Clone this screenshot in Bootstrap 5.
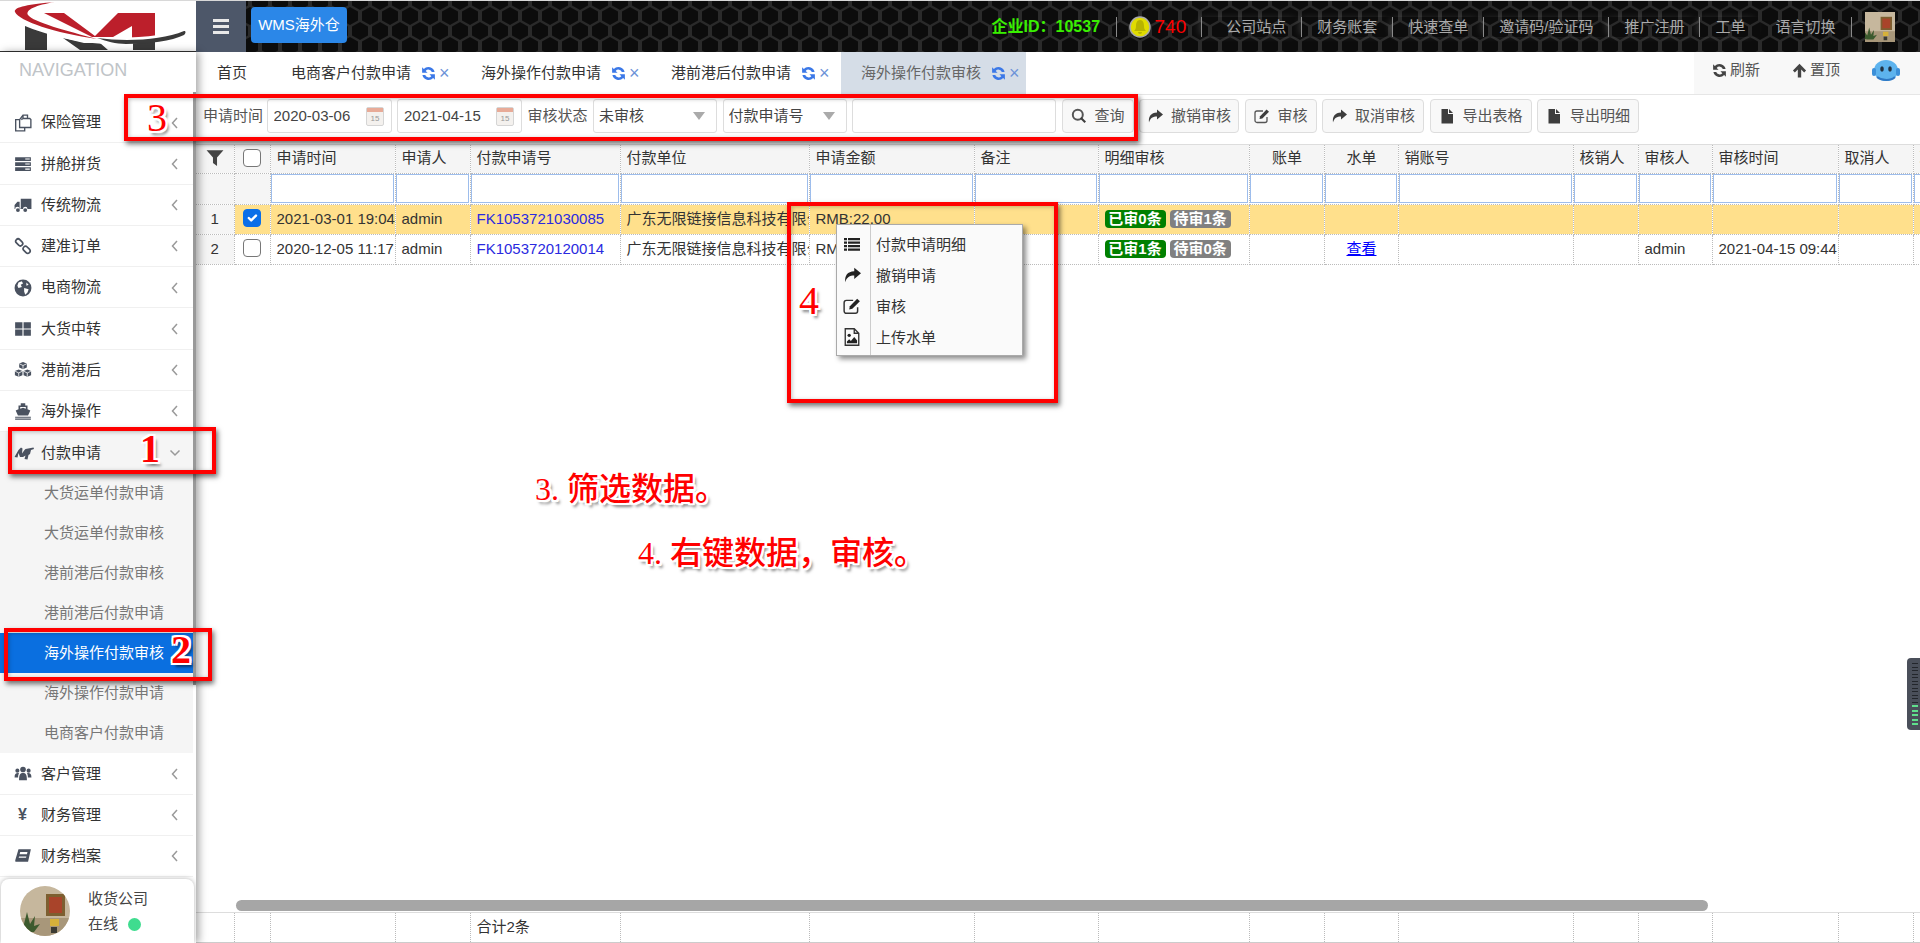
<!DOCTYPE html>
<html lang="zh">
<head>
  <meta charset="UTF-8">
  <title>WMS海外仓 - 海外操作付款审核</title>
  <link href="https://cdn.jsdelivr.net/npm/bootstrap@5.3.0/dist/css/bootstrap.min.css" rel="stylesheet">
  <style>
    html, body { height: 100%; margin: 0; overflow: hidden; }
    body { font-family: "Liberation Sans", "Noto Sans CJK SC", sans-serif; font-size: 15px; color: #333; background: #fff; }
    .app-wrap { height: 943px; width: 1920px; position: relative; overflow: hidden; }

    /* top bar */
    .top-bar { height: 52px; border-top: 1px solid #d8d8d8; position: relative; background: #1a1a1a; }
    .hex-bg { position: absolute; left: 0; top: 0; width: 100%; height: 100%; }
    .logo-box { width: 196px; height: 51px; background: #fff; border-bottom: 1px solid #333; position: relative; }
    .menu-toggle { width: 50px; height: 51px; background: #4d5769; position: relative; border: 0; padding: 0; }
    .menu-toggle span { display: block; width: 16px; height: 3px; background: #e8e8e8; margin: 3px auto; }
    .wms-btn { position: relative; margin: 6px 0 0 5px; width: 96px; height: 36px; padding: 0; background: #2b87e8; border: 0; color: #fff; font-size: 15px; border-radius: 4px; }
    .top-right { position: relative; height: 51px; }
    .corp-id { color: #39f000; font-weight: bold; font-size: 16px; margin-right: 15.5px; }
    .top-link { height: 20px; line-height: 20px; padding: 0 15px; border-left: 1px solid #8a8a8a; color: #aaa; white-space: nowrap; box-shadow: -3px 0 8px -3px rgba(255, 255, 255, .25); }
    .top-link.first { padding-left: 24px; }
    .top-link.plain { border-left: 0; padding-left: 15px; padding-right: 15.5px; box-shadow: none; }
    .alarm { height: 20px; line-height: 20px; padding: 0 15px 0 12px; border-left: 1px solid #8a8a8a; color: #f00; font-size: 19px; display: flex; align-items: center; gap: 4px; }
    .top-photo { width: 30px; height: 30px; margin: 0 25px 0 13px; display: block; }
    .photo-wrap { border-left: 1px solid #8a8a8a; height: 20px; display: flex; align-items: center; }

    /* side menu */
    .side-menu { width: 196px; height: 891px; position: relative; background: #fff; box-shadow: 3px 0 8px rgba(0, 0, 0, .35); overflow: hidden; z-index: 3; flex: none; }
    .side-scroll { position: absolute; right: 0; top: 40px; width: 3px; height: 593px; background: #999; }
    .nav-title { height: 50px; padding: 6px 0 0 19px; font-size: 18px; line-height: 24px; color: #c0c4c8; }
    .menu-row { height: 41.25px; width: 193px; display: flex; align-items: center; border-bottom: 1px solid #f0f0f0; color: #333; padding-left: 14px; padding-top: 1px; }
    .menu-row.open { border-bottom: 0; background: #f5f5f5; }
    .menu-ico { width: 18px; height: 18px; color: #4a5260; flex: none; fill: currentColor; margin-right: 9px; }
    .menu-ico.wide { width: 21px; margin-right: 6px; }
    .yen-ico { width: 17px; margin-right: 10px; text-align: center; color: #4a5260; font-weight: bold; flex: none; font-size: 16px; }
    .menu-arrow { margin-left: auto; margin-right: 14px; width: 8px; height: 12px; stroke: #999; fill: none; stroke-width: 1.5; }
    .menu-arrow.down { width: 12px; margin-right: 12px; }
    .sub-list { width: 193px; background: #f5f5f5; }
    .sub-row { height: 40px; line-height: 40px; padding-left: 44px; color: #777; }
    .sub-row.current { background: #0a6fe0; color: #fff; }
    .user-panel { position: absolute; left: 1px; top: 827px; width: 193px; height: 64px; background: #fff; border-radius: 8px 8px 0 0; box-shadow: 0 0 5px rgba(0, 0, 0, .3); display: flex; }
    .user-photo { width: 50px; height: 50px; border-radius: 50%; margin: 7px 18px 0 19px; flex: none; }
    .user-text { line-height: 25px; padding-top: 7px; color: #444; }
    .dot-online { display: inline-block; width: 13px; height: 13px; border-radius: 50%; background: #3fdc8f; margin-left: 10px; vertical-align: -2px; }

    /* tabs */
    .page-area { width: 1724px; height: 891px; flex: none; }
    .tab-row { height: 43px; border-bottom: 1px solid #e6e6e6; }
    .tab-cell { height: 42px; display: flex; align-items: center; padding-left: 20px; width: 190px; color: #333; }
    .tab-cell.home { width: 75px; padding-left: 21px; }
    .tab-cell.active { width: 185px; background: #d5dde7; color: #666; }
    .tab-sync { width: 15px; height: 15px; fill: #3b78e7; margin: 0 3px 0 10px; }
    .tab-x { color: #6d93d8; font-size: 18px; line-height: 14px; }
    .tab-tools { margin-left: auto; width: 226px; height: 42px; background: #f8f8f8; display: flex; align-items: center; color: #555; padding: 0 0 5px 18px; }
    .tool-ico { width: 15px; height: 15px; fill: #444; margin-right: 3px; }
    .tool-ico.next { margin-left: 32px; }
    .robot-ico { width: 28px; height: 22px; margin-left: 32px; }

    /* filter bar */
    .filter-bar { height: 49px; padding: 4px 0 0 7px; gap: 5.5px; }
    .filter-label { line-height: 34px; color: #555; white-space: nowrap; width: 58px; }
    .filter-label.second { width: 60px; }
    .date-box { width: 125px; height: 34px; border: 1px solid #ddd; border-radius: 3px; padding: 0 7px 0 6px; }
    .date-box input { border: 0; outline: 0; width: 88px; font-size: 15px; color: #444; padding: 0; background: transparent; }
    .date-ico { width: 18px; height: 20px; margin-left: auto; }
    .filter-sel.form-select { width: 124px; height: 34px; border: 1px solid #ddd; border-radius: 3px; font-size: 15px; color: #444; padding: 0 20px 0 5px;
      background-image: url("data:image/svg+xml,%3Csvg xmlns='http://www.w3.org/2000/svg' viewBox='0 0 12 8'%3E%3Cpath fill='%23aaa' d='M0 0h12L6 8z'/%3E%3C/svg%3E"); background-size: 12px 8px; background-position: right 11px center; }
    .filter-text.form-control { width: 204px; height: 34px; border: 1px solid #ddd; border-radius: 3px; }
    .bar-btn.btn { height: 34px; padding: 0 8px; background: #f8f8f8; border: 1px solid #ddd; border-radius: 4px; color: #555; font-size: 15px; display: flex; align-items: center; gap: 8px; white-space: nowrap; }
    .bar-btn.btn.tight { padding: 0 7px; }
    .bar-ico { width: 16px; height: 16px; fill: #3d3d3d; flex: none; }

    /* grid */
    .grid-scroll { flex: 1; overflow: hidden; border-top: 1px solid #ddd; }
    .grid-tbl { table-layout: fixed; width: 1696px; border-collapse: collapse; margin: 0; }
    .grid-tbl col:nth-child(1) { width: 38px; }
    .grid-tbl col:nth-child(2) { width: 36px; }
    .grid-tbl col:nth-child(3) { width: 125px; }
    .grid-tbl col:nth-child(4) { width: 75px; }
    .grid-tbl col:nth-child(5) { width: 150px; }
    .grid-tbl col:nth-child(6) { width: 189px; }
    .grid-tbl col:nth-child(7) { width: 165px; }
    .grid-tbl col:nth-child(8) { width: 124px; }
    .grid-tbl col:nth-child(9) { width: 151px; }
    .grid-tbl col:nth-child(10) { width: 75px; }
    .grid-tbl col:nth-child(11) { width: 74px; }
    .grid-tbl col:nth-child(12) { width: 175px; }
    .grid-tbl col:nth-child(13) { width: 65px; }
    .grid-tbl col:nth-child(14) { width: 74px; }
    .grid-tbl col:nth-child(15) { width: 126px; }
    .grid-tbl col:nth-child(16) { width: 75px; }
    .grid-tbl col:nth-child(17) { width: 99px; }
    .grid-tbl th, .grid-tbl td { padding: 0 5px 0 6px; border: 0; border-right: 1px dotted #bbb; border-bottom: 1px dotted #bbb; box-shadow: none; white-space: nowrap; overflow: hidden; font-weight: normal; font-size: 15px; color: #333; vertical-align: middle; }
    .grid-tbl th { height: 28px; background: #f5f5f5; padding-bottom: 2px; }
    .grid-tbl td { height: 30px; }
    .grid-tbl tr.filter-row td { height: 31px; padding: 0 1px 0 0; background: #fff; }
    .grid-tbl tr.filter-row td.idx, .grid-tbl td.idx { background: #f5f5f5; text-align: center; padding: 0; }
    .grid-tbl tr.filter-row td.blank { background: #f5f5f5; }
    .grid-tbl tr.sel td { background: #ffe08c; }
    .grid-tbl tr.sel td.idx { background: #f5f5f5; }
    .grid-tbl .chk-cell { text-align: center; padding: 0; }
    .grid-tbl .mid { text-align: center; }
    .col-filter.form-control { height: 29px; width: 100%; padding: 0; border: 1px solid #9dbdec; border-radius: 0; min-height: 0; }
    .row-chk.form-check-input { width: 18px; height: 18px; margin: 1px 0 0; border: 1px solid #777; border-radius: 4px; float: none; }
    .row-chk.form-check-input:checked { background-color: #0a6fe8; border-color: #0a6fe8; }
    .filter-ico { width: 18px; height: 18px; fill: #444; display: block; margin: 0 auto; }
    .pay-no { color: #2a2ae0; text-decoration: none; }
    .view-link { color: #00f; }
    .tag-ok, .tag-wait { display: inline-block; width: 61px; height: 18px; line-height: 18px; border-radius: 4px; color: #fff; font-weight: bold; text-align: center; font-size: 15px; }
    .tag-ok { background: #008000; }
    .tag-wait { background: #808080; }
    .h-scroll { height: 11px; width: 1472px; margin: 0 0 1px 40px; background: #a6a6a6; border-radius: 6px; flex: none; }
    .sum-row { flex: none; border-top: 1px solid #ddd; overflow: hidden; height: 31px; border-bottom: 1px solid #ccc; }
    .sum-row .grid-tbl td { border-bottom: 0; height: 29px; }

    /* right-click menu */
    .ctx-menu.dropdown-menu { display: block; position: absolute; left: 836px; top: 224px; width: 187px; height: 132px; min-width: 0; padding: 5px 0 0; margin: 0; border: 1px solid #aaa; border-radius: 0; box-shadow: 3px 3px 5px rgba(0, 0, 0, .45); z-index: 6;
      background: linear-gradient(#ccc, #ccc) 33px 0 / 1px 100% no-repeat #fafafa; }
    .ctx-item { height: 31px; display: flex; align-items: center; color: #333; font-size: 15px; }
    .ctx-ico { width: 18px; height: 18px; margin: -4px 15px 0 6px; fill: #222; flex: none; }

    /* red notes painted over the page */
    .note-box { position: absolute; border: 4px solid #f00; box-shadow: 2px 3px 5px rgba(0, 0, 0, .55), inset 1px 1px 4px rgba(0, 0, 0, .25); z-index: 7; pointer-events: none; }
    .note-mark { position: absolute; z-index: 8; color: #f00; font-family: "Liberation Serif", "Noto Sans CJK SC", serif; line-height: 1;
      text-shadow: -2px 0 0 #fff, 2px 0 0 #fff, 0 -2px 0 #fff, 0 2px 0 #fff, -2px -2px 0 #fff, 2px -2px 0 #fff, -2px 2px 0 #fff, 2px 2px 0 #fff, 3px 4px 3px rgba(0, 0, 0, .5); }
    .note-num { font-size: 40px; }
    .note-num.heavy { font-weight: bold; }
    .note-line { font-size: 32px; font-weight: 500; white-space: nowrap; }
    .n1 { left: 8px; top: 427px; width: 208px; height: 47px; }
    .n2 { left: 4px; top: 628px; width: 208px; height: 53px; }
    .n3 { left: 124px; top: 94px; width: 1014px; height: 47px; }
    .n4 { left: 787px; top: 202px; width: 271px; height: 201px; }
    .m1 { left: 140px; top: 429px; }
    .m2 { left: 171px; top: 630px; }
    .m3 { left: 147px; top: 98px; }
    .m4 { left: 799px; top: 281px; }
    .l3 { left: 535px; top: 473px; }
    .l4 { left: 638px; top: 537px; }

    .side-widget { position: absolute; right: 0; top: 658px; width: 13px; height: 72px; background: #4a4f5a; border-radius: 4px 0 0 4px; z-index: 4; padding: 5px 2px 5px 5px; display: flex; flex-direction: column; justify-content: space-between; }
    .side-widget i { display: block; height: 1px; background: #23262c; }
    .side-widget i.on { background: #5fe08c; height: 2px; }
  </style>
</head>
<body>
<svg width="0" height="0" class="position-absolute">
  <defs>
    <symbol id="i-copy" viewBox="0 0 16 16"><path fill="none" stroke="currentColor" stroke-width="1.2" d="M5 5H1.5v10h8v-3M5 5l3-4h4v3M5 5v7h10V5l-1-1H8L6.5 5M8 1v3"/></symbol>
    <symbol id="i-server" viewBox="0 0 16 16"><path d="M1 2h14v3.4H1zM1 6.4h14v3.4H1zM1 10.8h14v3.4H1z"/><path fill="#fff" d="M10 3h4v1h-4zM10 7.5h4v1h-4zM10 12h4v1h-4z"/></symbol>
    <symbol id="i-truck" viewBox="0 0 16 16"><path d="M6 2.5h9.500v9H12a2 2 0 0 0-4 0H6.500A2 2 0 0 0 6 11H5V5H3L.5 8v3.500H1a2 2 0 0 1 4 0h1z"/><circle cx="3.500" cy="12.500" r="1.700"/><circle cx="10" cy="12.500" r="1.700"/></symbol>
    <symbol id="i-link" viewBox="0 0 16 16"><g fill="none" stroke="currentColor" stroke-width="1.500"><rect x="-3.200" y="-2" width="7" height="4.200" rx="2.100" transform="translate(4.500 4.500) rotate(45)"/><rect x="-3.800" y="-2" width="7" height="4.200" rx="2.100" transform="translate(11.500 11.500) rotate(45)"/></g></symbol>
    <symbol id="i-globe" viewBox="0 0 16 16"><circle cx="8" cy="8" r="7.500"/><path fill="#fff" d="M4 3l3-1 1 2-2 1 1 2-3 1-1-2zM9 8l4 1-1 3-2 2-1-3zM11 3l2 2-2 1z"/></symbol>
    <symbol id="i-grid" viewBox="0 0 16 16"><path d="M1 2h6.500v5.500H1zM8.500 2H15v5.500H8.500zM1 8.500h6.500V14H1zM8.500 8.500H15V14H8.500z"/></symbol>
    <symbol id="i-cubes" viewBox="0 0 16 16"><path d="M8 .8l3.400 1.500v3.500L8 7.300 4.600 5.800V2.300zM4.200 7.500l3.300 1.400v3.700l-3.300 1.500L.8 12.600V8.900zM11.800 7.500l3.400 1.400v3.700l-3.400 1.500-3.300-1.500V8.900z"/><path fill="none" stroke="#fff" stroke-width=".7" d="M4.800 2.500L8 4l3.200-1.500M8 4v3M1 9.100l3.200 1.500 3.200-1.500M4.200 10.600v3.300M8.600 9.100l3.200 1.500L15 9.100M11.800 10.600v3.300"/></symbol>
    <symbol id="i-ship" viewBox="0 0 16 16"><path d="M6 1h4v2h2v3.500l2.500 1L12.500 12h-9L1.500 7.500 4 6.500V3h2zM5.500 4.500v1.400L8 5l2.500.9V4.500zM1 13h14v1H1zM1 14.700h14v1H1z"/></symbol>
    <symbol id="i-pay" viewBox="0 0 21 16"><path d="M.5 12L4.500 5 7 2.500l1.500 1-.5 5 2.500-3.500 1-1 8-1.500.5 1.500-3 1-1 4-1.500 1-1 4.500-3-.5 1-3.500-2.500 1.500H6L4.500 8 3.500 12.500z"/></symbol>
    <symbol id="i-users" viewBox="0 0 16 16"><circle cx="3" cy="5" r="1.800"/><circle cx="13" cy="5" r="1.800"/><circle cx="8" cy="4" r="2.500"/><path d="M.5 11c0-3 1-4 3-4l1 .3C3.800 8.300 3.600 9.700 3.700 11zM15.500 11c0-3-1-4-3-4l-1 .3c.7 1 .9 2.400.8 3.700zM4.500 13.500c0-5 1-6.500 3.500-6.500s3.500 1.500 3.500 6.500z"/></symbol>
    <symbol id="i-book" viewBox="0 0 16 16"><path d="M4 2h11l-2.500 11H1.500C1 13 1 12 1.300 11zM5.500 4.500L5 6.500h6.500l.5-2zM4.500 8.500l-.3 1h6.500l.3-1z"/></symbol>
    <symbol id="i-sync" viewBox="0 0 16 16"><path d="M14.500 6.500A6.800 6.800 0 0 0 3 3.200L1.200 1.400v5.800h5.800L5 5.200a3.800 3.800 0 0 1 6.500 1.300z"/><path d="M1.500 9.500A6.800 6.800 0 0 0 13 12.800l1.800 1.800V8.800H9l2 2a3.800 3.800 0 0 1-6.500-1.300z"/></symbol>
    <symbol id="i-up" viewBox="0 0 16 16"><path d="M8 .8l7 7.200-2 2-3.200-3.200V15.500H6.200V6.800L3 10 1 8z"/></symbol>
    <symbol id="i-search" viewBox="0 0 16 16"><circle cx="6.800" cy="6.800" r="5" fill="none" stroke="currentColor" stroke-width="2"/><path d="M10.400 9L15 13.600 13.500 15l-4.500-4.500z"/></symbol>
    <symbol id="i-share" viewBox="0 0 16 16"><path d="M10 1.500L16 6.500l-6 5V8.500C6 8.500 3.200 10 2 14.500 1.300 8.500 4 4.800 10 4.600z"/></symbol>
    <symbol id="i-edit" viewBox="0 0 16 16"><path fill="none" stroke="currentColor" stroke-width="1.300" d="M13 9v3.500a2 2 0 0 1-2 2H3a2 2 0 0 1-2-2V5a2 2 0 0 1 2-2h6"/><path d="M5.500 11l.6-2.800 6.500-6.700 2.400 2.300L8.300 10.500z"/></symbol>
    <symbol id="i-file" viewBox="0 0 16 16"><path d="M2.500 1H9v5h5v9.500H2.500zM10 1l4 4h-4z"/></symbol>
    <symbol id="i-funnel" viewBox="0 0 16 16"><path d="M.5 1h15L9.800 7.500V15L6.200 12.500v-5z"/></symbol>
    <symbol id="i-list" viewBox="0 0 18 16"><path d="M1 2h3v2.200H1zM5 2h12v2.200H5zM1 5.500h3v2.200H1zM5 5.500h12v2.200H5zM1 9h3v2.200H1zM5 9h12v2.200H5zM1 12.500h3v2.200H1zM5 12.500h12v2.200H5z"/></symbol>
    <symbol id="i-img" viewBox="0 0 16 16"><path fill="none" stroke="currentColor" stroke-width="1.200" d="M2 .7h8l4 4v10.600H2zM10 .7v4h4"/><circle cx="5.500" cy="6.500" r="1.500"/><path d="M3.500 13.500V12l2-2 1.500 1.500 3-3.500 2.500 3v2.500z"/></symbol>
    <symbol id="i-photo" viewBox="0 0 50 50"><rect width="50" height="50" fill="#c6b79d"/><rect y="32" width="50" height="18" fill="#a8977a"/><rect x="26" y="8" width="19" height="22" fill="#7d5f30"/><rect x="29" y="11" width="13" height="16" fill="#a9442a"/><rect x="30" y="33" width="9" height="7" fill="#d6b13a"/><rect x="31" y="41" width="6" height="6" fill="#3b3b33"/><path fill="#3c5a2e" d="M2 46L7 26l3 12 5-8-1 10 6-2-6 8zM0 34l6 8-6 4z"/></symbol>
    <symbol id="i-date" viewBox="0 0 18 20"><rect x=".5" y="1.500" width="17" height="18" rx="1.500" fill="#f4f1ee" stroke="#d5d5d5"/><rect x="1" y="2" width="16" height="4" fill="#e8ab98"/><text x="9" y="15" font-size="8" fill="#999" text-anchor="middle" font-family="Liberation Sans">15</text></symbol>
  </defs>
</svg>

<div class="app-wrap">
  <!-- TOP BAR -->
  <div class="top-bar d-flex">
    <svg class="hex-bg" aria-hidden="true">
      <defs>
        <pattern id="hexPat" width="20" height="30" patternUnits="userSpaceOnUse">
          <rect width="20" height="30" fill="#2a2a2a"/>
          <path fill="#0c0c0c" d="M10 6l8 4.500v9L10 24l-8-4.500v-9zM0-9l8 4.500v9L0 9l-8-4.500v-9zM20-9l8 4.500v9L20 9l-8-4.500v-9zM0 21l8 4.500v9L0 39l-8-4.500v-9zM20 21l8 4.500v9L20 39l-8-4.500v-9z"/>
        </pattern>
      </defs>
      <rect width="100%" height="100%" fill="url(#hexPat)"/>
    </svg>
    <div class="logo-box">
      <svg width="196" height="50" viewBox="0 0 196 50">
        <path fill="#3a3a3a" d="M25 23l22 7v19H25zM63 37l17 12h28l-8-7H84zM133 41h22v8h-22z"/>
        <path fill="#bc1f2b" d="M44 12h20l31 23 23-23h37v26h-23V25l-19 11H92z"/>
        <path fill="#fff" d="M22 18c25 12 60 19 85 19 30 0 55-2 78-9v4c-22 9-50 11-78 11-30-1-65-10-89-21z"/>
        <path fill="#b81f2a" d="M55 1C30 3 13 6 15 11c4 9 40 21 82 27-30-8-64-17-69-24-3-5 8-10 27-13z"/>
        <path fill="#3a3a3a" d="M97 37c30 4 65 2 87-7 2 0 2 2 0 4-12 6-35 9-58 9-10 0-20-3-29-6z"/>
      </svg>
    </div>
    <button class="menu-toggle" aria-label="menu"><span></span><span></span><span></span></button>
    <button class="wms-btn">WMS海外仓</button>
    <div class="top-right d-flex align-items-center ms-auto">
      <span class="corp-id">企业ID：10537</span>
      <span class="alarm">
        <svg width="22" height="22" viewBox="0 0 22 22"><circle cx="11" cy="11" r="10" fill="#e0dc00" stroke="#aaa" stroke-width="1.500"/><path fill="#b8b400" d="M11 4c3 0 4 3 4 6s1 4 2 5H5c1-1 2-2 2-5s1-6 4-6zM9 16h4a2 2 0 0 1-4 0z"/></svg>
        740
      </span>
      <span class="top-link first">公司站点</span>
      <span class="top-link">财务账套</span>
      <span class="top-link">快速查单</span>
      <span class="top-link">邀请码/验证码</span>
      <span class="top-link">推广注册</span>
      <span class="top-link">工单</span>
      <span class="top-link plain">语言切换</span>
      <span class="photo-wrap"><svg class="top-photo"><use href="#i-photo"/></svg></span>
    </div>
  </div>

  <div class="d-flex">
    <!-- SIDE MENU -->
    <div class="side-menu">
      <div class="nav-title">NAVIGATION</div>
      <div class="menu-row"><svg class="menu-ico"><use href="#i-copy"/></svg>保险管理<svg class="menu-arrow" viewBox="0 0 8 12"><path d="M6 1L1.500 6 6 11"/></svg></div>
      <div class="menu-row"><svg class="menu-ico"><use href="#i-server"/></svg>拼舱拼货<svg class="menu-arrow" viewBox="0 0 8 12"><path d="M6 1L1.500 6 6 11"/></svg></div>
      <div class="menu-row"><svg class="menu-ico"><use href="#i-truck"/></svg>传统物流<svg class="menu-arrow" viewBox="0 0 8 12"><path d="M6 1L1.500 6 6 11"/></svg></div>
      <div class="menu-row"><svg class="menu-ico"><use href="#i-link"/></svg>建准订单<svg class="menu-arrow" viewBox="0 0 8 12"><path d="M6 1L1.500 6 6 11"/></svg></div>
      <div class="menu-row"><svg class="menu-ico"><use href="#i-globe"/></svg>电商物流<svg class="menu-arrow" viewBox="0 0 8 12"><path d="M6 1L1.500 6 6 11"/></svg></div>
      <div class="menu-row"><svg class="menu-ico"><use href="#i-grid"/></svg>大货中转<svg class="menu-arrow" viewBox="0 0 8 12"><path d="M6 1L1.500 6 6 11"/></svg></div>
      <div class="menu-row"><svg class="menu-ico"><use href="#i-cubes"/></svg>港前港后<svg class="menu-arrow" viewBox="0 0 8 12"><path d="M6 1L1.500 6 6 11"/></svg></div>
      <div class="menu-row"><svg class="menu-ico"><use href="#i-ship"/></svg>海外操作<svg class="menu-arrow" viewBox="0 0 8 12"><path d="M6 1L1.500 6 6 11"/></svg></div>
      <div class="menu-row open"><svg class="menu-ico wide"><use href="#i-pay"/></svg>付款申请<svg class="menu-arrow down" viewBox="0 0 12 8"><path d="M1.500 1.500L6 6l4.500-4.500"/></svg></div>
      <div class="sub-list">
        <div class="sub-row">大货运单付款申请</div>
        <div class="sub-row">大货运单付款审核</div>
        <div class="sub-row">港前港后付款审核</div>
        <div class="sub-row">港前港后付款申请</div>
        <div class="sub-row current">海外操作付款审核</div>
        <div class="sub-row">海外操作付款申请</div>
        <div class="sub-row">电商客户付款申请</div>
      </div>
      <div class="menu-row"><svg class="menu-ico"><use href="#i-users"/></svg>客户管理<svg class="menu-arrow" viewBox="0 0 8 12"><path d="M6 1L1.500 6 6 11"/></svg></div>
      <div class="menu-row"><span class="yen-ico">¥</span>财务管理<svg class="menu-arrow" viewBox="0 0 8 12"><path d="M6 1L1.500 6 6 11"/></svg></div>
      <div class="menu-row"><svg class="menu-ico"><use href="#i-book"/></svg>财务档案<svg class="menu-arrow" viewBox="0 0 8 12"><path d="M6 1L1.500 6 6 11"/></svg></div>
      <div class="side-scroll"></div>
      <div class="user-panel">
        <svg class="user-photo"><use href="#i-photo"/></svg>
        <div class="user-text">收货公司<br>在线<span class="dot-online"></span></div>
      </div>
    </div>

    <!-- PAGE -->
    <div class="page-area d-flex flex-column">
      <div class="tab-row d-flex">
        <div class="tab-cell home">首页</div>
        <div class="tab-cell">电商客户付款申请<svg class="tab-sync"><use href="#i-sync"/></svg><span class="tab-x">×</span></div>
        <div class="tab-cell">海外操作付款申请<svg class="tab-sync"><use href="#i-sync"/></svg><span class="tab-x">×</span></div>
        <div class="tab-cell">港前港后付款申请<svg class="tab-sync"><use href="#i-sync"/></svg><span class="tab-x">×</span></div>
        <div class="tab-cell active">海外操作付款审核<svg class="tab-sync"><use href="#i-sync"/></svg><span class="tab-x">×</span></div>
        <div class="tab-tools">
          <svg class="tool-ico"><use href="#i-sync"/></svg>刷新
          <svg class="tool-ico next"><use href="#i-up"/></svg>置顶
          <svg class="robot-ico" viewBox="0 0 28 22"><ellipse cx="14" cy="10.500" rx="12" ry="10.500" fill="#5db3ee"/><rect x="0" y="8" width="4" height="8" rx="2" fill="#3c8fd8"/><rect x="24" y="8" width="4" height="8" rx="2" fill="#3c8fd8"/><ellipse cx="10" cy="9" rx="1.800" ry="2.800" fill="#234"/><ellipse cx="18" cy="9" rx="1.800" ry="2.800" fill="#234"/><path d="M5 17c5 4 14 4 18 0" fill="none" stroke="#2f78c4" stroke-width="2"/></svg>
        </div>
      </div>

      <div class="filter-bar d-flex">
        <span class="filter-label">申请时间</span>
        <div class="date-box d-flex align-items-center"><input type="text" value="2020-03-06"><svg class="date-ico"><use href="#i-date"/></svg></div>
        <div class="date-box d-flex align-items-center"><input type="text" value="2021-04-15"><svg class="date-ico"><use href="#i-date"/></svg></div>
        <span class="filter-label second">审核状态</span>
        <select class="form-select filter-sel"><option>未审核</option></select>
        <select class="form-select filter-sel"><option>付款申请号</option></select>
        <input type="text" class="form-control filter-text">
        <button class="btn bar-btn"><svg class="bar-ico"><use href="#i-search"/></svg>查询</button>
        <button class="btn bar-btn tight"><svg class="bar-ico"><use href="#i-share"/></svg>撤销审核</button>
        <button class="btn bar-btn"><svg class="bar-ico"><use href="#i-edit"/></svg>审核</button>
        <button class="btn bar-btn"><svg class="bar-ico"><use href="#i-share"/></svg>取消审核</button>
        <button class="btn bar-btn"><svg class="bar-ico"><use href="#i-file"/></svg>导出表格</button>
        <button class="btn bar-btn"><svg class="bar-ico"><use href="#i-file"/></svg>导出明细</button>
      </div>

      <div class="grid-scroll">
        <table class="table grid-tbl">
          <colgroup><col><col><col><col><col><col><col><col><col><col><col><col><col><col><col><col><col></colgroup>
          <thead>
            <tr>
              <th><svg class="filter-ico"><use href="#i-funnel"/></svg></th>
              <th class="chk-cell"><input class="form-check-input row-chk" type="checkbox"></th>
              <th>申请时间</th><th>申请人</th><th>付款申请号</th><th>付款单位</th><th>申请金额</th><th>备注</th><th>明细审核</th>
              <th class="mid">账单</th><th class="mid">水单</th><th>销账号</th><th>核销人</th><th>审核人</th><th>审核时间</th><th>取消人</th><th>取消时间</th>
            </tr>
          </thead>
          <tbody>
            <tr class="filter-row">
              <td class="blank"></td><td class="blank"></td>
              <td><input class="form-control col-filter"></td><td><input class="form-control col-filter"></td><td><input class="form-control col-filter"></td>
              <td><input class="form-control col-filter"></td><td><input class="form-control col-filter"></td><td><input class="form-control col-filter"></td>
              <td><input class="form-control col-filter"></td><td><input class="form-control col-filter"></td><td><input class="form-control col-filter"></td>
              <td><input class="form-control col-filter"></td><td><input class="form-control col-filter"></td><td><input class="form-control col-filter"></td>
              <td><input class="form-control col-filter"></td><td><input class="form-control col-filter"></td><td><input class="form-control col-filter"></td>
            </tr>
            <tr class="sel">
              <td class="idx">1</td>
              <td class="chk-cell"><input class="form-check-input row-chk" type="checkbox" checked></td>
              <td>2021-03-01 19:04</td><td>admin</td><td><a class="pay-no" href="#">FK1053721030085</a></td>
              <td>广东无限链接信息科技有限公司</td><td>RMB:22.00</td><td></td>
              <td><span class="tag-ok">已审0条</span> <span class="tag-wait">待审1条</span></td>
              <td></td><td></td><td></td><td></td><td></td><td></td><td></td><td></td>
            </tr>
            <tr>
              <td class="idx">2</td>
              <td class="chk-cell"><input class="form-check-input row-chk" type="checkbox"></td>
              <td>2020-12-05 11:17</td><td>admin</td><td><a class="pay-no" href="#">FK1053720120014</a></td>
              <td>广东无限链接信息科技有限公司</td><td>RMB:22.00</td><td></td>
              <td><span class="tag-ok">已审1条</span> <span class="tag-wait">待审0条</span></td>
              <td></td><td class="mid"><a class="view-link" href="#">查看</a></td><td></td><td></td><td>admin</td><td>2021-04-15 09:44</td><td></td><td></td>
            </tr>
          </tbody>
        </table>
      </div>
      <div class="h-scroll"></div>
      <div class="sum-row">
        <table class="table grid-tbl">
          <colgroup><col><col><col><col><col><col><col><col><col><col><col><col><col><col><col><col><col></colgroup>
          <tbody>
            <tr><td></td><td></td><td></td><td></td><td>合计2条</td><td></td><td></td><td></td><td></td><td></td><td></td><td></td><td></td><td></td><td></td><td></td><td></td></tr>
          </tbody>
        </table>
      </div>
    </div>
  </div>

  <!-- RIGHT CLICK MENU -->
  <div class="dropdown-menu ctx-menu">
    <div class="ctx-item"><svg class="ctx-ico"><use href="#i-list"/></svg>付款申请明细</div>
    <div class="ctx-item"><svg class="ctx-ico"><use href="#i-share"/></svg>撤销申请</div>
    <div class="ctx-item"><svg class="ctx-ico"><use href="#i-edit"/></svg>审核</div>
    <div class="ctx-item"><svg class="ctx-ico"><use href="#i-img"/></svg>上传水单</div>
  </div>

  <!-- RED NOTES -->
  <div class="note-box n1"></div>
  <div class="note-box n2"></div>
  <div class="note-box n3"></div>
  <div class="note-box n4"></div>
  <span class="note-mark note-num heavy m1">1</span>
  <span class="note-mark note-num heavy m2">2</span>
  <span class="note-mark note-num m3">3</span>
  <span class="note-mark note-num m4">4</span>
  <span class="note-mark note-line l3">3. 筛选数据。</span>
  <span class="note-mark note-line l4">4. 右键数据，审核。</span>

  <div class="side-widget">
    <i></i><i></i><i></i><i></i><i></i><i></i><i></i><i></i><i></i><i></i><i></i><i></i><i class="on"></i><i class="on"></i><i class="on"></i><i class="on"></i><i class="on"></i>
  </div>
</div>
<script src="https://cdn.jsdelivr.net/npm/bootstrap@5.3.0/dist/js/bootstrap.bundle.min.js"></script>
</body>
</html>
